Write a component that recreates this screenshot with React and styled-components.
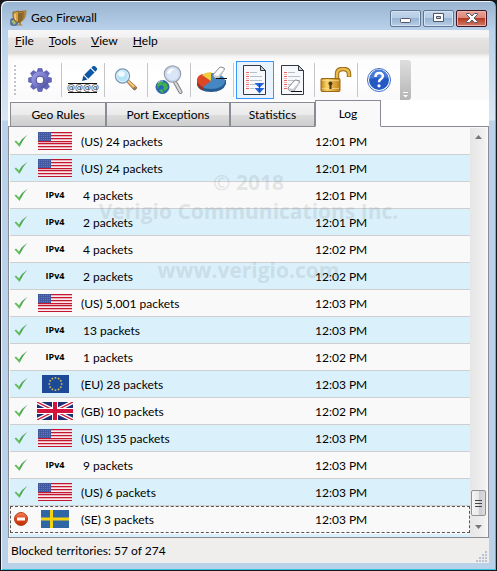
import React from 'react';
import styled, { createGlobalStyle, css } from 'styled-components';

const GlobalStyle = createGlobalStyle`
  * { box-sizing: border-box; }
  body {
    margin: 0;
    background: #17171c;
    color: #000;
    font: 12px/16px Lato, "Open Sans", sans-serif;
  }
  button {
    margin: 0;
    padding: 0;
    border: 0;
    background: none;
    font: inherit;
    color: inherit;
  }
`;

const Window = styled.div`
  display: flex;
  flex-direction: column;
  min-height: 100vh;
  padding: 0 7px 7px;
  border: 1px solid #17171c;
  border-radius: 7px 7px 0 0;
  background: linear-gradient(
    #98b3d0 0, #b9d1ea 29px, #d9e7f5 119px, #bad1ea 120px, #bad1ea 100%
  );
  box-shadow: inset 1px 1px 0 #eef5fb, inset -1px -1px 0 #35c5df;
`;

const TitleBar = styled.header`
  display: flex;
  align-items: center;
  height: 29px;
  padding: 5px 2px 0 2px;
  gap: 4px;
`;

const Title = styled.h1`
  flex: 1;
  margin: 0;
  font-size: 12px;
  font-weight: 400;
`;

const WindowButtons = styled.div`
  display: flex;
  gap: 2px;
`;

const WindowButton = styled.button`
  display: flex;
  align-items: center;
  justify-content: center;
  width: 31px;
  height: 17px;
  border: 1px solid ${p => (p.$close ? '#431422' : '#5f7591')};
  border-radius: 2px;
  background: ${p =>
    p.$close
      ? 'linear-gradient(#e8a59a, #d98576 50%, #b83a20 50%, #d07a68)'
      : 'linear-gradient(#c3d6ea, #b5cce4 50%, #98b4d3 50%, #b7cee6)'};
  box-shadow: inset 0 0 0 1px ${p => (p.$close ? '#e9b4ac' : '#d3e3f3')};
`;

const MenuBar = styled.nav`
  display: flex;
  height: 30px;
  padding: 3px 0 11px 7px;
  gap: 15px;
  background: linear-gradient(
    #f6f6f6 0, #f3f2f2 7px, #e7e4e4 8px, #dddbd9 23px, #f4f3f3 26px, #fcfcfc 30px
  );
`;

const ToolStrip = styled.div`
  display: flex;
  height: 40px;
  padding-left: 3px;
  background: #fafafa;
`;

const ToolBar = styled.div`
  display: flex;
  align-items: center;
  padding-left: 3px;
  border-radius: 3px 0 0 3px;
  background: linear-gradient(#fcfcfd, #fff 40%, #f9f9fb);
`;

const Grip = styled.span`
  width: 2px;
  height: 30px;
  margin-right: 3px;
  background: repeating-linear-gradient(#c4c4c8 0 2px, transparent 2px 4px);
`;

const ToolGroup = styled.div`
  display: flex;
  align-items: center;
  height: 34px;
  padding: 0 2px;
  & + & { border-left: 1px solid #c6c6c9; }
`;

const ToolButton = styled.button`
  display: flex;
  align-items: center;
  justify-content: center;
  width: 38px;
  height: 38px;
  ${p =>
    p.$active &&
    css`
      border: 1px solid #3399ff;
      background: #e9f3fd;
    `}
`;

const Overflow = styled.button`
  display: flex;
  align-items: flex-end;
  justify-content: center;
  width: 11px;
  padding-bottom: 2px;
  border-radius: 0 3px 3px 0;
  background: linear-gradient(#dedede, #b5b5b5);
`;

const TabList = styled.div`
  display: grid;
  grid-template-columns: 96px 124px 85px 66px;
  align-items: end;
  height: 27px;
  padding-left: 2px;
  border-bottom: 1px solid #898c95;
  background: #fff;
`;

const Tab = styled.button`
  height: 25px;
  margin-bottom: -1px;
  border: 1px solid #898c95;
  background: linear-gradient(#f3f3f3, #ebebeb 50%, #dddddd 50%, #cdcdcd);
  ${p =>
    p.$selected &&
    css`
      height: 27px;
      border-bottom-color: #f9f9f9;
      background: #f9f9f9;
    `}
`;

const LogPanel = styled.main`
  position: relative;
  display: flex;
  flex: 1;
  padding: 1px 1px 0;
  border: solid #898c95;
  border-width: 0 1px 1px;
  background: #f9f9f9;
`;

const LogArea = styled.div`
  flex: 1;
  padding-bottom: 4px;
  background: linear-gradient(#daf0fb, #daf0fb) bottom / 100% 3px no-repeat;
`;

const LogTable = styled.table`
  width: 100%;
  table-layout: fixed;
  border-collapse: separate;
  border-spacing: 0;
`;

const LogRow = styled.tr`
  background: #f9f9f9;
  &:nth-child(even) { background: #daf0fb; }
  ${p => p.$focused && 'outline: 1px dashed #555; outline-offset: -1px;'}
`;

const Cell = styled.td`
  height: 27px;
  padding: 1px 0 0 ${p => p.$indent || 0}px;
  border-bottom: 1px solid ${p => (p.$last ? 'transparent' : '#cfcfd2')};
`;

const IconCell = styled(Cell)`
  padding: 0;
  text-align: center;
  svg { display: block; margin: 0 auto; }
`;

const Protocol = styled.span`
  display: block;
  font: 700 9px/16px "Open Sans", sans-serif;
`;

const Watermark = styled.div`
  position: absolute;
  top: 41px;
  left: 0;
  right: 0;
  color: rgba(120, 125, 130, 0.18);
  font: 700 21px/29px "Open Sans", sans-serif;
  text-align: center;
  pointer-events: none;
  p { margin: 0; }
  p:last-child { margin-top: 30px; }
`;

const ScrollBar = styled.div`
  display: flex;
  flex-direction: column;
  align-items: center;
  width: 17px;
  padding-bottom: 2px;
  background: linear-gradient(90deg, #e6e6e6, #efefef 80%, #f6f6f6);
`;

const ScrollArrow = styled.button`
  display: flex;
  align-items: center;
  justify-content: center;
  width: 17px;
  height: 17px;
`;

const Thumb = styled.div`
  display: flex;
  align-items: center;
  justify-content: center;
  width: 15px;
  height: 26px;
  margin: auto 0 2px;
  border: 1px solid #8f9195;
  border-radius: 2px;
  background: linear-gradient(90deg, #f5f5f5, #e9e9eb 50%, #c9cacc 50%, #dcdcde);
`;

const StatusBar = styled.footer`
  display: flex;
  align-items: center;
  justify-content: space-between;
  height: 25px;
  padding: 0 1px 0 3px;
  background: #f0eded;
  svg { align-self: flex-end; }
`;

const TrophyIcon = () => (
  <svg width="17" height="17" viewBox="0 0 17 17" aria-hidden="true">
    <rect x="0" y="8" width="8" height="8" rx="3" fill="#56749d" />
    <path d="M1 11l3-1 2 3-2 2z" fill="#a6b86d" />
    <path d="M10 1l6.500-1q0 6-2 9-1.500 2.500-3.500 3v2l2 1.500H7L9 14z" fill="#a98646" />
    <path d="M3 2q3 0 5-1 2 1 5 1v5q-1 4-5 6-4-2-5-6z" fill="#d5a03c" stroke="#6d4c20" strokeWidth=".8" />
    <path d="M8 2v11q4-2 4.500-6V3Q9 3 8 2z" fill="#86632f" />
    <path d="M5 4v4l1 2" stroke="#ffe39a" fill="none" />
  </svg>
);

const GearIcon = () => (
  <svg width="24" height="24" viewBox="-12 -12 24 24" aria-hidden="true">
    <defs>
      <linearGradient id="gear" x1="0" y1="0" x2="1" y2="1">
        <stop offset="0" stopColor="#a6a6ea" />
        <stop offset=".55" stopColor="#7577c8" />
        <stop offset="1" stopColor="#41448f" />
      </linearGradient>
    </defs>
    <g fill="#6567ba" stroke="#4c4e9c" strokeWidth=".5">
      {[0, 45, 90, 135, 180, 225, 270, 315].map(a => (
        <path key={a} d="M-3.200-7L-2-11.500H2L3.200-7z" transform={`rotate(${a})`} />
      ))}
    </g>
    <circle r="8.600" fill="url(#gear)" />
    <circle r="3.900" fill="#fff" stroke="#484a94" />
  </svg>
);

const EditIcon = () => (
  <svg width="32" height="28" viewBox="0 0 32 28" aria-hidden="true">
    <path d="M15 15l1.500-5.500 4 4z" fill="#0d4c93" />
    <path d="M17.300 8.700L23.500 2.500l4 4-6.200 6.200z" fill="#0d57a7" />
    <path d="M24.300 1.700L26 0q1-.5 2 .3L30 2.300q.5 1-.2 1.700l-1.500 1.700z" fill="#0d57a7" />
    <path d="M1 17.500h29M1 26.500h29" stroke="#111" />
    <text x="0" y="24" fill="#222" fontFamily="DejaVu Sans, sans-serif" fontSize="8">
      @@@@
    </text>
  </svg>
);

const SearchIcon = () => (
  <svg width="24" height="24" viewBox="0 0 24 24" aria-hidden="true">
    <path d="M12 13l2-1.500 8.500 7.500q1 2-2.500 3z" fill="#e09a43" stroke="#94602b" strokeWidth=".8" />
    <path d="M14 13l6.500 6" stroke="#f9d490" strokeWidth="1.500" />
    <path d="M20.500 18.500l2 2-1.500 2-2-2z" fill="#8a7a68" />
    <circle cx="8.500" cy="8" r="7" fill="#b5e2f8" stroke="#7d9bb8" strokeWidth="1.400" />
    <circle cx="8.500" cy="8" r="5.800" fill="none" stroke="#dff3fc" />
    <ellipse cx="7.500" cy="6" rx="3.500" ry="2.800" fill="#effaff" />
  </svg>
);

const GlobeSearchIcon = () => (
  <svg width="28" height="30" viewBox="0 0 28 30" aria-hidden="true">
    <path d="M20 17l5.500 10" stroke="#808080" strokeWidth="4" strokeLinecap="round" />
    <path d="M20 17l5.500 10" stroke="#dadadc" strokeWidth="2" strokeLinecap="round" />
    <circle cx="17.500" cy="9" r="8.200" fill="#d8e6f8" stroke="#9aa1ab" strokeWidth="1.200" />
    <circle cx="17.500" cy="9" r="6.800" fill="none" stroke="#c3d3ec" />
    <path d="M12 8q2-5 8-4-4 1-5 5z" fill="#fff" />
    <circle cx="7.500" cy="22" r="6.500" fill="#2366bd" stroke="#315f97" />
    <path d="M2 20q1-3 4-4l2 1-1 3-3 1-1 3zM9 17l3 2 1 4-3 3-2-2 1-2-2-2zM4 25l3-1 2 3-2 1z" fill="#43b04a" />
    <path d="M3 18q2-3 5-2" stroke="#a5cdf2" fill="none" />
  </svg>
);

const Eraser = ({ x, y }) => (
  <g transform={`translate(${x} ${y})`}>
    <path d="M0 8L6 1q1-1 2-1l3 1q1 1 0 2L6 11H2Q0 10 0 8z" fill="#fff" stroke="#85898e" />
    <path d="M1 8l4 1 6-7v2l-5 7H2z" fill="#c7cacf" />
    <path d="M3 11.500h11" stroke="#111" />
  </g>
);

const ChartIcon = () => (
  <svg width="32" height="28" viewBox="0 0 32 28" aria-hidden="true">
    <path d="M1 16v3q2 7 14 7t15-8v-4z" fill="#245a8f" />
    <ellipse cx="15" cy="15" rx="14" ry="8" fill="#4587c2" />
    <path d="M15 15L7 21q-6-3-6-7 0-4 5-6z" fill="#de4724" />
    <path d="M1 14v4q1 4 6 6v-3q-6-3-6-7z" fill="#a92d16" />
    <path d="M15 15L6 9q4-3 9-3z" fill="#f2cd3f" />
    <Eraser x={17} y={1} />
  </svg>
);

const Sheet = ({ children }) => (
  <svg width="26" height="32" viewBox="0 0 26 32" aria-hidden="true">
    <path d="M1.500 1.500h17l5 5v24h-22z" fill="#f6f8fb" stroke="#343941" />
    <path d="M18.500 1.500v5h5z" fill="#c5ccd5" stroke="#343941" />
    <path d="M4 8.500h3M4 12.500h3M4 16.500h3M4 20.500h3M4 24.500h3" stroke="#ec6464" />
    <path d="M8 8.500h7M8 12.500h12M8 16.500h12M8 20.500h6M8 24.500h4" stroke="#b9bfc8" />
    <path d="M4 10.500h3M4 14.500h3M4 18.500h3M4 22.500h3" stroke="#f5b4b4" />
    {children}
  </svg>
);

const ScrollLogIcon = () => (
  <Sheet>
    <path d="M12.500 19h10L17.500 24zM12.500 24h10l-5 5.500z" fill="#2866d8" />
    <path d="M17 19h1v9h-1z" fill="#174ab0" />
  </Sheet>
);

const ClearLogIcon = () => (
  <Sheet>
    <Eraser x={8} y={16} />
  </Sheet>
);

const LockIcon = () => (
  <svg width="32" height="26" viewBox="0 0 32 26" aria-hidden="true">
    <defs>
      <linearGradient id="brass">
        <stop offset="0" stopColor="#c88716" />
        <stop offset=".3" stopColor="#f8d56c" />
        <stop offset="1" stopColor="#c18117" />
      </linearGradient>
    </defs>
    <path d="M17 13V7q0-5 6-5t6 5v3" fill="none" stroke="#9a6b15" strokeWidth="4.500" />
    <path d="M17 13V7q0-5 6-5t6 5v2.500" fill="none" stroke="#e8b94b" strokeWidth="2.500" />
    <rect x="1" y="11.500" width="19" height="13" rx="1" fill="url(#brass)" stroke="#9a6916" />
    <path d="M2 13.500h17M2 21.500h17" stroke="#ffe79d" opacity=".6" />
    <circle cx="10.500" cy="16.500" r="2" fill="#4c3914" />
    <path d="M9.500 16h2v6h-2z" fill="#4c3914" />
  </svg>
);

const HelpIcon = () => (
  <svg width="26" height="26" viewBox="0 0 26 26" aria-hidden="true">
    <circle cx="13" cy="13" r="11.500" fill="#fff" stroke="#3b6cc5" />
    <circle cx="13" cy="13" r="10" fill="#2459c5" />
    <path d="M4 12a9 9 0 0118-1q-8-2-18 1z" fill="#4b7bd8" />
    <path d="M9.500 10q0-4 3.700-4t3.600 3.300q0 1.700-2 2.900-1.800 1-1.800 3" fill="none" stroke="#fff" strokeWidth="2.500" />
    <circle cx="13" cy="18.800" r="1.600" fill="#fff" />
  </svg>
);

const CheckIcon = () => (
  <svg width="14" height="14" viewBox="0 0 14 14" role="img" aria-label="Allowed">
    <defs>
      <linearGradient id="tick" x1="0" y1="1" x2="1" y2="0">
        <stop offset="0" stopColor="#8fdc79" />
        <stop offset=".45" stopColor="#45a847" />
        <stop offset="1" stopColor="#7ba487" />
      </linearGradient>
    </defs>
    <path d="M.5 7.500L2 6.500l3 3Q8 4 13.500.8 8.500 6 5.500 13z" fill="url(#tick)" />
  </svg>
);

const BlockIcon = () => (
  <svg width="14" height="14" viewBox="0 0 14 14" role="img" aria-label="Blocked">
    <defs>
      <linearGradient id="stop" x1="0" y1="0" x2="0" y2="1">
        <stop offset="0" stopColor="#f4875f" />
        <stop offset=".5" stopColor="#e04318" />
        <stop offset="1" stopColor="#b8320e" />
      </linearGradient>
    </defs>
    <circle cx="7" cy="7" r="6.500" fill="url(#stop)" stroke="#b8411d" />
    <rect x="3" y="5.500" width="8" height="3" fill="#fff" />
  </svg>
);

const Flags = {
  US: () => (
    <svg width="34" height="18" viewBox="0 0 34 18" aria-hidden="true">
      <path d="M0 0h34v18H0z" fill="#f7e9ec" />
      {[0, 3, 6, 9, 11, 14, 17].map(y => (
        <path key={y} d={`M0 ${y}h34v1.200H0z`} fill="#c4162f" />
      ))}
      <path d="M0 0h13v9H0z" fill="#42599f" />
      <path d="M1 1.500h12M1 3.500h12M1 5.500h12M1 7.500h12" stroke="#6478b4" strokeDasharray="1 1" />
    </svg>
  ),
  EU: () => (
    <svg width="27" height="18" viewBox="0 0 27 18" aria-hidden="true">
      <path d="M0 0h27v18H0z" fill="#1d4a98" />
      {[...Array(12)].map((_, i) => (
        <rect key={i} x="12.700" y="2" width="1.600" height="1.600" fill="#cabf55" transform={`rotate(${i * 30} 13.500 9)`} />
      ))}
    </svg>
  ),
  GB: () => (
    <svg width="36" height="18" viewBox="0 0 36 18" aria-hidden="true">
      <path d="M0 0h36v18H0z" fill="#1e2e72" />
      <path d="M0 0l36 18M36 0L0 18" stroke="#fff" strokeWidth="4" />
      <path d="M0 0l36 18M36 0L0 18" stroke="#d01b3b" strokeWidth="1.300" />
      <path d="M18 0v18M0 9h36" stroke="#fff" strokeWidth="6" />
      <path d="M18 0v18M0 9h36" stroke="#d4143a" strokeWidth="4" />
    </svg>
  ),
  SE: () => (
    <svg width="28" height="18" viewBox="0 0 28 18" aria-hidden="true">
      <path d="M0 0h28v18H0z" fill="#2f66a4" />
      <path d="M9 0h3v7.500h16v3H12V18H9v-7.500H0v-3h9z" fill="#f5d30f" />
    </svg>
  ),
};

const menus = ['File', 'Tools', 'View', 'Help'];
const tabs = ['Geo Rules', 'Port Exceptions', 'Statistics', 'Log'];

const tools = [
  [{ name: 'Settings', Icon: GearIcon }],
  [{ name: 'Edit addresses', Icon: EditIcon }],
  [{ name: 'Search', Icon: SearchIcon }],
  [{ name: 'Look up territory', Icon: GlobeSearchIcon }],
  [{ name: 'Clear statistics', Icon: ChartIcon }],
  [
    { name: 'Scroll log', Icon: ScrollLogIcon, active: true },
    { name: 'Clear log', Icon: ClearLogIcon },
  ],
  [{ name: 'Unlock', Icon: LockIcon }],
  [{ name: 'Help', Icon: HelpIcon }],
];

const log = [
  { code: 'US', packets: '24', time: '12:01 PM' },
  { code: 'US', packets: '24', time: '12:01 PM' },
  { packets: '4', time: '12:01 PM' },
  { packets: '2', time: '12:01 PM' },
  { packets: '4', time: '12:02 PM' },
  { packets: '2', time: '12:02 PM' },
  { code: 'US', packets: '5,001', time: '12:03 PM' },
  { packets: '13', time: '12:03 PM' },
  { packets: '1', time: '12:02 PM' },
  { code: 'EU', packets: '28', time: '12:03 PM' },
  { code: 'GB', packets: '10', time: '12:02 PM' },
  { code: 'US', packets: '135', time: '12:03 PM' },
  { packets: '9', time: '12:03 PM' },
  { code: 'US', packets: '6', time: '12:03 PM' },
  { code: 'SE', packets: '3', time: '12:03 PM', blocked: true },
];

const Entry = ({ code, packets, time, blocked, last }) => {
  const Flag = Flags[code];
  return (
    <LogRow $focused={last}>
      <IconCell $last={last}>{blocked ? <BlockIcon /> : <CheckIcon />}</IconCell>
      <IconCell $last={last}>{Flag ? <Flag /> : <Protocol>IPv4</Protocol>}</IconCell>
      <Cell $indent={code ? 3 : 5} $last={last}>
        {code ? `(${code}) ` : ''}{packets} packets
      </Cell>
      <Cell $last={last}>{time}</Cell>
    </LogRow>
  );
};

const App = () => (
  <>
    <GlobalStyle />
    <Window>
      <TitleBar>
        <TrophyIcon />
        <Title>Geo Firewall</Title>
        <WindowButtons>
          <WindowButton aria-label="Minimize">
            <svg width="12" height="12" viewBox="0 0 12 12">
              <rect x=".5" y="6.500" width="10" height="4" rx="1" fill="#fff" stroke="#535666" />
            </svg>
          </WindowButton>
          <WindowButton aria-label="Maximize">
            <svg width="12" height="10" viewBox="0 0 12 10">
              <path d="M.5.5h10v8H.5zM3.500 3.500v2h4v-2z" fill="#fff" fillRule="evenodd" stroke="#535666" />
            </svg>
          </WindowButton>
          <WindowButton $close aria-label="Close">
            <svg width="12" height="10" viewBox="0 0 12 10">
              <path d="M.5.5h3L6 3 8.500.5h3v1L8 5l3.500 3.500v1h-3L6 7 3.500 9.500h-3v-1L4 5 .5 1.500z" fill="#fff" stroke="#535666" />
            </svg>
          </WindowButton>
        </WindowButtons>
      </TitleBar>
      <MenuBar>
        {menus.map(m => (
          <button key={m}>
            <u>{m[0]}</u>{m.slice(1)}
          </button>
        ))}
      </MenuBar>
      <ToolStrip>
        <ToolBar role="toolbar">
          <Grip />
          {tools.map((group, i) => (
            <ToolGroup key={i}>
              {group.map(({ name, Icon, active }) => (
                <ToolButton key={name} $active={active} aria-label={name}>
                  <Icon />
                </ToolButton>
              ))}
            </ToolGroup>
          ))}
        </ToolBar>
        <Overflow aria-label="More tools">
          <svg width="7" height="6" viewBox="0 0 7 6">
            <path d="M1 0h5v1H1zM1 3h5L3.500 5.500z" fill="#fff" />
          </svg>
        </Overflow>
      </ToolStrip>
      <TabList role="tablist">
        {tabs.map(t => (
          <Tab key={t} role="tab" aria-selected={t === 'Log'} $selected={t === 'Log'}>
            {t}
          </Tab>
        ))}
      </TabList>
      <LogPanel>
        <LogArea>
          <LogTable>
            <colgroup>
              <col width="22" />
              <col width="46" />
              <col />
              <col width="155" />
            </colgroup>
            <tbody>
              {log.map((entry, i) => (
                <Entry key={i} {...entry} last={i === log.length - 1} />
              ))}
            </tbody>
          </LogTable>
        </LogArea>
        <ScrollBar>
          <ScrollArrow aria-label="Scroll up">
            <svg width="7" height="4" viewBox="0 0 7 4">
              <path d="M0 4l3.500-4L7 4z" fill="#777" />
            </svg>
          </ScrollArrow>
          <Thumb>
            <svg width="7" height="9" viewBox="0 0 7 9">
              <path d="M0 1.500h7M0 4.500h7M0 7.500h7" stroke="#444" />
            </svg>
          </Thumb>
          <ScrollArrow aria-label="Scroll down">
            <svg width="7" height="4" viewBox="0 0 7 4">
              <path d="M0 0h7L3.500 4z" fill="#777" />
            </svg>
          </ScrollArrow>
        </ScrollBar>
        <Watermark>
          <p>© 2018</p>
          <p>Verigio Communications Inc.</p>
          <p>www.verigio.com</p>
        </Watermark>
      </LogPanel>
      <StatusBar>
        <span>Blocked territories: 57 of 274</span>
        <svg width="12" height="12" viewBox="0 0 12 12" aria-hidden="true">
          <path
            d="M9 0h2v2H9zM6 3h2v2H6zM9 3h2v2H9zM3 6h2v2H3zM6 6h2v2H6zM9 6h2v2H9zM0 9h2v2H0zM3 9h2v2H3zM6 9h2v2H6zM9 9h2v2H9z"
            fill="#b9c3d3"
          />
        </svg>
      </StatusBar>
    </Window>
  </>
);

export default App;
